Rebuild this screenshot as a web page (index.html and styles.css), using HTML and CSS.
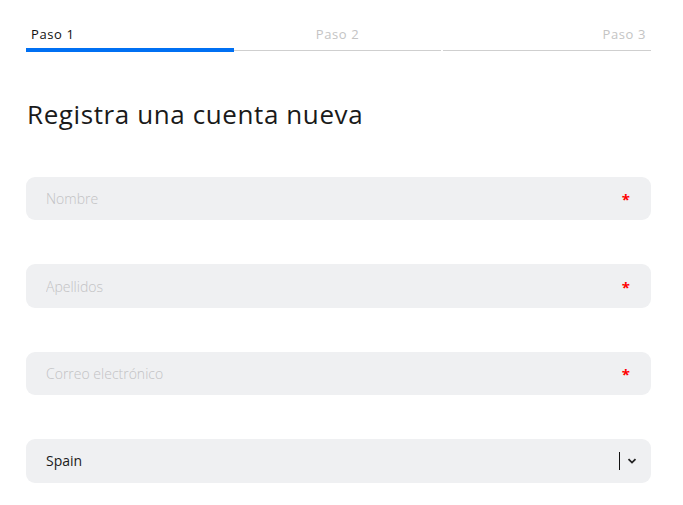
FILE: index.html
```html
<!DOCTYPE html>
<html lang="es">
<head>
<meta charset="utf-8">
<title>Registro</title>
<link rel="stylesheet" href="styles.css">
</head>
<body>
<div class="wrap">
  <div class="steps">
    <div class="step active">
      <span class="step-label">Paso 1</span>
      <div class="step-bar"></div>
    </div>
    <div class="step center">
      <span class="step-label">Paso 2</span>
      <div class="step-bar"></div>
    </div>
    <div class="step right">
      <span class="step-label">Paso 3</span>
      <div class="step-bar"></div>
    </div>
  </div>

  <h1 class="title">Registra una cuenta nueva</h1>

  <form class="form">
    <label class="field">
      <input class="field-input" type="text" placeholder="Nombre">
      <span class="req">*</span>
    </label>
    <label class="field">
      <input class="field-input" type="text" placeholder="Apellidos">
      <span class="req">*</span>
    </label>
    <label class="field">
      <input class="field-input" type="email" placeholder="Correo electrónico">
      <span class="req">*</span>
    </label>
    <div class="field select">
      <span class="select-value">Spain</span>
      <span class="select-sep"></span>
      <svg class="chev" width="10" height="6" viewBox="0 0 10 6"><path d="M1.5 1.2 L5 4.6 L8.5 1.2" fill="none" stroke="#222" stroke-width="1.8"/></svg>
    </div>
  </form>
</div>
</body>
</html>
```
FILE: styles.css
```css
* { box-sizing: border-box; }
html, body { margin: 0; padding: 0; background: #fff; }
body {
  font-family: "Open Sans", "Liberation Sans", sans-serif;
  color: #1a1a1a;
}
.wrap {
  width: 625px;
  margin-left: 26px;
  padding-top: 25px;
}
.steps {
  display: grid;
  grid-template-columns: 208px 207px 210px;
}
.step {
  display: flex;
  flex-direction: column;
}
.step-label {
  font-size: 13px;
  line-height: 18px;
  letter-spacing: 0.6px;
  padding: 0 5px;
  color: #c4c4c4;
  margin-bottom: 5px;
}
.step.active .step-label { color: #111; }
.step.center .step-label { text-align: center; }
.step.right .step-label { text-align: right; }
.step-bar {
  height: 4px;
  background: linear-gradient(#cfcfcf, #cfcfcf) center / 100% 1px no-repeat;
}
.step.right .step-bar { margin-left: 2px; }
.step.active .step-bar { background: #0070f3; }

.title {
  margin: 46px 0 0 1px;
  font-size: 26px;
  line-height: 32px;
  letter-spacing: 0.6px;
  font-weight: 400;
  color: #1a1a1a;
}
.form {
  margin-top: 47px;
  display: flex;
  flex-direction: column;
  gap: 44px;
}
.field {
  display: flex;
  align-items: center;
  height: 43.4px;
  background: #eff0f2;
  border-radius: 9px;
  padding: 0 21px 0 20px;
}
.field-input {
  flex: 1;
  border: 0;
  background: transparent;
  outline: none;
  padding: 0;
  font-family: "Open Sans", "Liberation Sans", sans-serif;
  font-weight: 300;
  font-size: 14px;
  color: #222;
}
.field-input::placeholder { color: #c2c2c4; }
.req {
  color: #f00;
  font-size: 15px;
  font-weight: 700;
  line-height: 1;
  margin-top: 2px;
}
.select { padding-right: 14px; }
.select-value {
  flex: 1;
  font-size: 14px;
  font-weight: 400;
  color: #1a1a1a;
}
.select-sep {
  width: 1px;
  height: 18px;
  background: #111;
  margin-right: 7px;
}
.chev { display: block; margin-top: 1px; }
```
